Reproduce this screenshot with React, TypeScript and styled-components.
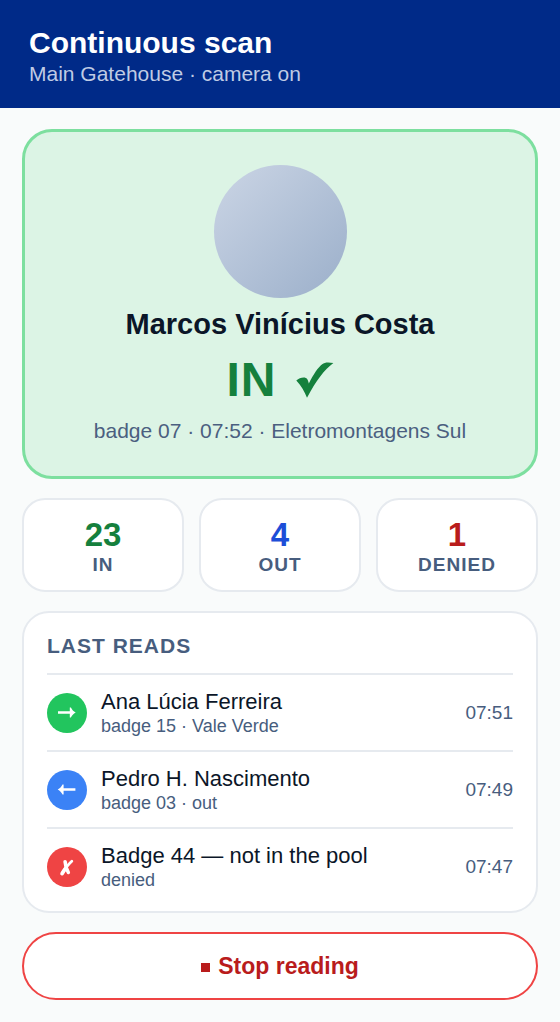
import React from "react";
import styled, { createGlobalStyle } from "styled-components";

const GlobalStyle = createGlobalStyle`
  *, *::before, *::after { box-sizing: border-box; }
  body {
    margin: 0;
    background: #f9fbfb;
    color: #0b1628;
    font-family: "Liberation Sans", Arial, Helvetica, sans-serif;
  }
  h1, h2, p, ul, dl, dd { margin: 0; padding: 0; }
`;

const Header = styled.header`
  padding: 25px 29px 21px;
  background: #002a88;
`;

const Title = styled.h1`
  color: #ffffff;
  font-size: 30px;
  line-height: 36px;
  font-weight: 700;
`;

const Subtitle = styled.p`
  color: #bfcbe4;
  font-size: 21px;
  line-height: 26px;
`;

const Main = styled.main`
  display: flex;
  flex-direction: column;
  gap: 19px;
  padding: 21px 22px 22px;
`;

const ResultCard = styled.section`
  display: flex;
  flex-direction: column;
  align-items: center;
  padding: 33px 24px 32px;
  border: 3px solid #7ddf9f;
  border-radius: 30px;
  background: #dcf4e5;
  text-align: center;
`;

const Avatar = styled.div`
  width: 133px;
  height: 133px;
  border-radius: 50%;
  background: linear-gradient(135deg, #cbd5e5, #9bafca);
`;

const PersonName = styled.h2`
  margin-top: 9px;
  font-size: 29px;
  line-height: 34px;
  font-weight: 700;
`;

const Status = styled.p`
  display: flex;
  align-items: center;
  gap: 19px;
  margin-top: 10px;
  color: #15803d;
  font-size: 48px;
  line-height: 58px;
  font-weight: 700;
  letter-spacing: 1px;
`;

const ResultMeta = styled.p`
  margin-top: 9px;
  color: #4b5f80;
  font-size: 21px;
  line-height: 26px;
`;

const Stats = styled.dl`
  display: grid;
  grid-template-columns: repeat(3, 1fr);
  gap: 15px;
`;

const Stat = styled.div`
  display: flex;
  flex-direction: column-reverse;
  padding: 16px 8px 15px;
  border: 2px solid #e6eaef;
  border-radius: 23px;
  background: #ffffff;
  text-align: center;
`;

const StatValue = styled.dd<{ $color: string }>`
  color: ${(p) => p.$color};
  font-size: 33px;
  line-height: 38px;
  font-weight: 700;
`;

const StatLabel = styled.dt`
  color: #475d7e;
  font-size: 19px;
  line-height: 21px;
  font-weight: 700;
  letter-spacing: 1px;
`;

const ReadsCard = styled.section`
  padding: 20px 23px 7px;
  border: 2px solid #e6eaef;
  border-radius: 27px;
  background: #ffffff;
`;

const ReadsTitle = styled.h2`
  margin-bottom: 14px;
  color: #475d7e;
  font-size: 21px;
  line-height: 26px;
  font-weight: 700;
  letter-spacing: 1px;
`;

const ReadList = styled.ul`
  list-style: none;
`;

const ReadRow = styled.li`
  display: flex;
  align-items: center;
  gap: 14px;
  height: 77px;
  border-top: 2px solid #e6eaef;
`;

const Badge = styled.span<{ $color: string }>`
  display: flex;
  flex: none;
  width: 40px;
  height: 40px;
  border-radius: 50%;
  background: ${(p) => p.$color};
`;

const ReadText = styled.div`
  flex: 1;
  min-width: 0;
`;

const ReadName = styled.p`
  font-size: 22px;
  line-height: 26px;
`;

const ReadDetail = styled.p`
  color: #475d7e;
  font-size: 18px;
  line-height: 22px;
`;

const ReadTime = styled.time`
  color: #475d7e;
  font-size: 19px;
  line-height: 22px;
`;

const StopButton = styled.button`
  display: flex;
  align-items: center;
  justify-content: center;
  gap: 8px;
  height: 68px;
  border: 2px solid #ef4444;
  border-radius: 34px;
  background: #ffffff;
  color: #b91c1c;
  font: 700 23px/28px "Liberation Sans", Arial, Helvetica, sans-serif;
  cursor: pointer;
`;

const StopMark = styled.span`
  width: 9px;
  height: 9px;
  margin-top: 2px;
  background: currentColor;
`;

const CheckIcon = () => (
  <svg width="38" height="36" viewBox="0 0 38 36" role="img" aria-label="confirmed">
    <path
      fill="currentColor"
      d="M0.3 18.5C2.6 16.4 5 15.4 7.7 15.4C10.8 15.4 12 17.4 12.8 21.4C17.8 11.8 22.2 5.2 26.2 2.2C28.8 0.2 32 0 37.4 1C28.5 7.6 20 18.6 11 35.8C8.6 29.6 5.2 23.4 0.3 18.5Z"
    />
  </svg>
);

const RightIcon = () => (
  <svg width="40" height="40" viewBox="0 0 40 40" aria-hidden="true">
    <path fill="#fff" d="M11 18.2H22.8V14.4H23.9C25 16.6 26.4 18.2 28.7 19.5C26.4 20.8 25 22.4 23.9 24.6H22.8V20.8H11Z" />
  </svg>
);

const LeftIcon = () => (
  <svg width="40" height="40" viewBox="0 0 40 40" aria-hidden="true">
    <path fill="#fff" d="M28.4 18.2H16.6V14.4H15.5C14.4 16.6 13 18.2 10.7 19.5C13 20.8 14.4 22.4 15.5 24.6H16.6V20.8H28.4Z" />
  </svg>
);

const CrossIcon = () => (
  <svg width="40" height="40" viewBox="0 0 40 40" aria-hidden="true" fill="none" stroke="#fff" strokeLinecap="round">
    <path strokeWidth="3.6" d="M18.1 14.7C18.4 18.6 19.2 22 21.3 25.4" />
    <path strokeWidth="2.8" d="M24.8 14.2C21.6 17 18.6 21 16 25" />
    <path strokeWidth="3.8" d="M18.2 21.8C17 23.4 16 25 15.1 26.6" />
  </svg>
);

const stats = [
  { label: "IN", value: 23, color: "#15803d" },
  { label: "OUT", value: 4, color: "#1d4ed8" },
  { label: "DENIED", value: 1, color: "#b91c1c" },
];

const reads = [
  { name: "Ana Lúcia Ferreira", detail: "badge 15 · Vale Verde", time: "07:51", color: "#22c55e", Icon: RightIcon },
  { name: "Pedro H. Nascimento", detail: "badge 03 · out", time: "07:49", color: "#3b82f6", Icon: LeftIcon },
  { name: "Badge 44 — not in the pool", detail: "denied", time: "07:47", color: "#ef4444", Icon: CrossIcon },
];

export default function App() {
  return (
    <>
      <GlobalStyle />
      <Header>
        <Title>Continuous scan</Title>
        <Subtitle>Main Gatehouse · camera on</Subtitle>
      </Header>
      <Main>
        <ResultCard>
          <Avatar />
          <PersonName>Marcos Vinícius Costa</PersonName>
          <Status>
            IN <CheckIcon />
          </Status>
          <ResultMeta>badge 07 · 07:52 · Eletromontagens Sul</ResultMeta>
        </ResultCard>
        <Stats>
          {stats.map((s) => (
            <Stat key={s.label}>
              <StatLabel>{s.label}</StatLabel>
              <StatValue $color={s.color}>{s.value}</StatValue>
            </Stat>
          ))}
        </Stats>
        <ReadsCard>
          <ReadsTitle>LAST READS</ReadsTitle>
          <ReadList>
            {reads.map(({ name, detail, time, color, Icon }) => (
              <ReadRow key={name}>
                <Badge $color={color}>
                  <Icon />
                </Badge>
                <ReadText>
                  <ReadName>{name}</ReadName>
                  <ReadDetail>{detail}</ReadDetail>
                </ReadText>
                <ReadTime>{time}</ReadTime>
              </ReadRow>
            ))}
          </ReadList>
        </ReadsCard>
        <StopButton type="button">
          <StopMark aria-hidden="true" />
          Stop reading
        </StopButton>
      </Main>
    </>
  );
}
